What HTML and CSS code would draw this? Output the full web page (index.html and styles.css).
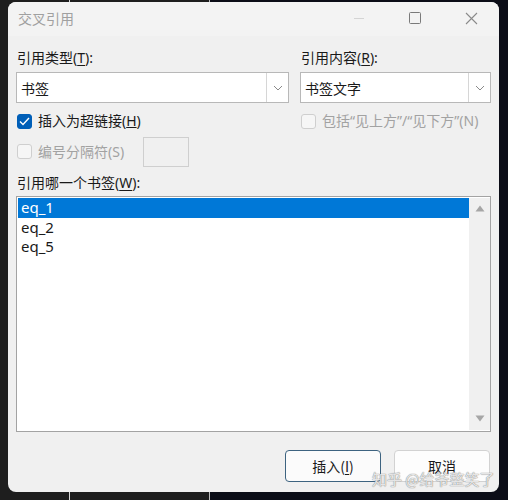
FILE: index.html
```html
<!DOCTYPE html>
<html lang="zh-CN">
<head>
    <meta charset="UTF-8">
    <title>交叉引用</title>
    <link rel="stylesheet" href="styles.css">
</head>
<body>

<div class="dialog">
    <div class="titlebar">
        <span class="title">交叉引用</span>
        <div class="caption">
            <span class="cap-btn">
                <svg width="12" height="12" viewBox="0 0 12 12"><path d="M1 6.5h10" stroke="#d4d4d4" stroke-width="1"/></svg>
            </span>
            <span class="cap-btn">
                <svg width="12" height="12" viewBox="0 0 12 12"><rect x="0.5" y="0.5" width="11" height="11" rx="1" fill="none" stroke="#7a7a7a" stroke-width="1"/></svg>
            </span>
            <span class="cap-btn">
                <svg width="13" height="13" viewBox="0 0 13 13"><path d="M1 1l11 11M12 1L1 12" stroke="#8a8a8a" stroke-width="1.1"/></svg>
            </span>
        </div>
    </div>

    <div class="content">
        <div class="pair">
            <div class="field wide">
                <div class="label">引用类型(<u>T</u>):</div>
                <div class="combo">
                    <span class="combo-text">书签</span>
                    <span class="drop">
                        <svg width="10" height="6" viewBox="0 0 10 6"><path d="M1 1l4 4 4-4" fill="none" stroke="#8a8a8a" stroke-width="1"/></svg>
                    </span>
                </div>
            </div>
            <div class="field narrow">
                <div class="label">引用内容(<u>R</u>):</div>
                <div class="combo">
                    <span class="combo-text">书签文字</span>
                    <span class="drop">
                        <svg width="10" height="6" viewBox="0 0 10 6"><path d="M1 1l4 4 4-4" fill="none" stroke="#8a8a8a" stroke-width="1"/></svg>
                    </span>
                </div>
            </div>
        </div>

        <div class="pair checks">
            <div class="check wide">
                <span class="box on">
                    <svg width="11" height="9" viewBox="0 0 11 9"><path d="M1 4.5l3 3 6-6.5" fill="none" stroke="#fff" stroke-width="1.4"/></svg>
                </span>
                <span>插入为超链接(<u>H</u>)</span>
            </div>
            <div class="check narrow disabled">
                <span class="box"></span>
                <span>包括“见上方”/“见下方”(N)</span>
            </div>
        </div>

        <div class="sep-row">
            <div class="check disabled">
                <span class="box"></span>
                <span>编号分隔符(S)</span>
            </div>
            <span class="small-input"></span>
        </div>

        <div class="label list-label">引用哪一个书签(<u>W</u>):</div>
        <div class="list">
            <div class="items">
                <div class="item selected">eq_1</div>
                <div class="item">eq_2</div>
                <div class="item">eq_5</div>
            </div>
            <div class="scrollbar">
                <svg width="10" height="7" viewBox="0 0 10 7"><path d="M5 0.5L9.5 6.5H0.5z" fill="#a6a6a6"/></svg>
                <svg width="10" height="7" viewBox="0 0 10 7"><path d="M5 6.5L9.5 0.5H0.5z" fill="#a6a6a6"/></svg>
            </div>
        </div>

        <div class="buttons">
            <button class="btn primary">插入(<u>I</u>)</button>
            <button class="btn">取消</button>
        </div>
    </div>

    <div class="watermark">知乎 @给爷整笑了</div>
</div>

</body>
</html>
```

FILE: styles.css
```css
/* Resetting Defaults */
* {
    margin: 0;
    padding: 0;
    box-sizing: border-box;
}

/* Desktop behind the dialog */
body {
    width: 508px;
    height: 500px;
    padding: 2px 9px 0 8px;
    font-family: "Noto Sans", "Noto Sans CJK SC", sans-serif;
    font-size: 14px;
    color: #1a1a1a;
    background:
        linear-gradient(90deg, transparent 69px, #d8d8d8 69px, #d8d8d8 70px, transparent 70px, transparent 209px, #bdbdbd 209px, #bdbdbd 210px, transparent 210px),
        linear-gradient(90deg, #1e1e1e 0, #1e1e1e 210px, #0b0d17 210px);
    overflow: hidden;
}

/* Dialog window */
.dialog {
    position: relative;
    width: 491px;
    height: 490px;
    background-color: #f0f0f0;
    border-radius: 8px;
    display: flex;
    flex-direction: column;
}

.titlebar {
    height: 34px;
    display: flex;
    align-items: center;
    justify-content: space-between;
    padding: 0 0 0 10px;
    background-color: #f3f3f3;
    border-radius: 8px 8px 0 0;
}

.title {
    font-family: "Noto Sans CJK SC", sans-serif;
    font-size: 14px;
    color: #a0a0a0;
    margin-top: -2px;
}

.caption {
    display: flex;
    align-items: center;
    margin-top: -2px;
}

.cap-btn {
    width: 56px;
    height: 32px;
    display: flex;
    align-items: center;
    justify-content: center;
}

/* Main Content */
.content {
    padding: 12px 8px 0 8px;
    display: flex;
    flex-direction: column;
}

.label {
    padding-left: 1px;
    font-size: 14px;
    line-height: 20px;
    height: 20px;
    color: #1a1a1a;
}

.label u {
    text-underline-offset: 2px;
}

.pair {
    display: flex;
    gap: 11px;
}

.wide {
    width: 273px;
}

.narrow {
    width: 191px;
}

.field .label {
    margin-bottom: 4px;
}

.combo {
    height: 31px;
    background-color: #fff;
    border: 1px solid #b8b8b8;
    display: flex;
    align-items: center;
}

.combo-text {
    flex: 1;
    padding-left: 4px;
    font-size: 14px;
}

.drop {
    width: 22px;
    height: 100%;
    border-left: 1px solid #d6d6d6;
    display: flex;
    align-items: center;
    justify-content: center;
}

/* Checkboxes */
.checks {
    margin-top: 10px;
}

.check {
    display: flex;
    align-items: center;
    gap: 6px;
    font-size: 14px;
    line-height: 16px;
    padding-left: 1px;
}

.check.disabled {
    color: #a2a2a2;
}

.box {
    width: 15px;
    height: 15px;
    border-radius: 3px;
    border: 1px solid #cfcfcf;
    background-color: #f6f6f6;
    display: flex;
    align-items: center;
    justify-content: center;
}

.box.on {
    background-color: #005fb8;
    border-color: #005fb8;
}

.sep-row {
    display: flex;
    align-items: center;
    margin-top: 7px;
    height: 31px;
}

.small-input {
    width: 46px;
    height: 30px;
    margin-left: 19px;
    border: 1px solid #cfcfcf;
    background-color: #f0f0f0;
}

.list-label {
    margin-top: 6px;
}

/* Bookmark list */
.list {
    margin-top: 3px;
    height: 236px;
    border: 1px solid #a3a3a3;
    background-color: #fff;
    display: flex;
    padding: 1px 0 1px 1px;
}

.items {
    flex: 1;
}

.item {
    height: 19.5px;
    line-height: 19px;
    padding-left: 3px;
    font-size: 15px;
    color: #1a1a1a;
}

.item.selected {
    background-color: #0078d7;
    color: #fff;
}

.scrollbar {
    width: 21px;
    background-color: #f0f0f0;
    display: flex;
    flex-direction: column;
    align-items: center;
    justify-content: space-between;
    padding: 7px 0 8px 0;
}

/* Buttons */
.buttons {
    display: flex;
    justify-content: flex-end;
    gap: 13px;
    margin-top: 18px;
    padding-right: 1px;
}

.btn {
    width: 96px;
    height: 32px;
    font-family: "Noto Sans CJK SC", sans-serif;
    font-size: 14px;
    color: #1a1a1a;
    background-color: #fdfdfd;
    border: 1px solid #d2d2d2;
    border-radius: 4px;
}

.btn.primary {
    border-color: #3d6380;
    background-color: #fbfbfb;
}

.btn u {
    text-underline-offset: 2px;
}

/* Site watermark over the corner */
.watermark {
    position: absolute;
    left: 364px;
    top: 468px;
    font-family: "Noto Sans CJK SC", sans-serif;
    font-size: 15px;
    line-height: 18px;
    color: rgba(255, 255, 255, 0.8);
    text-shadow: 0 0 1px #8a8a8a, 0 0 1px #8a8a8a;
    white-space: nowrap;
}
```
